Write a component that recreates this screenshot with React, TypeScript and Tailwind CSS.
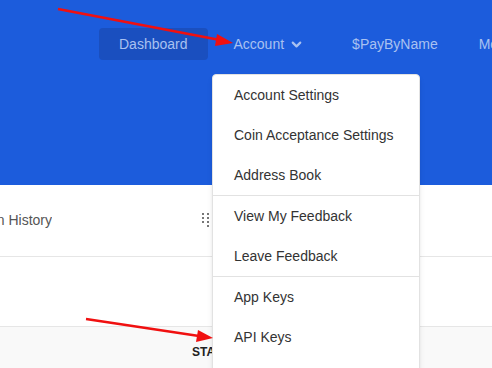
import { ChevronDown } from "lucide-react";

const menuGroups = [
  ["Account Settings", "Coin Acceptance Settings", "Address Book"],
  ["View My Feedback", "Leave Feedback"],
  ["App Keys", "API Keys"],
];

const GripIcon = () => (
  <svg width="8" height="16" viewBox="0 0 8 16" className="text-[#777]">
    {[0, 4, 8].map((y) => (
      <g key={y}>
        <rect x="0" y={y} width="2" height="2" fill="currentColor" />
        <rect x="5" y={y} width="2" height="2" fill="currentColor" />
      </g>
    ))}
    <rect x="5" y="12" width="2" height="2" fill="currentColor" />
  </svg>
);

const AccountMenu = () => (
  <div className="absolute left-[212px] top-[74px] w-[208px] h-[320px] bg-white border border-[#e2e2e2] rounded-t shadow-md">
    {menuGroups.map((group, i) => (
      <div
        key={i}
        className={i > 0 ? "border-t border-[#e2e2e2]" : ""}
      >
        {group.map((label) => (
          <div
            key={label}
            className="h-10 flex items-center pl-[21px] text-[14px] text-[#333]"
          >
            {label}
          </div>
        ))}
      </div>
    ))}
  </div>
);

const Arrows = () => (
  <svg
    className="absolute inset-0 pointer-events-none"
    width="492"
    height="368"
    viewBox="0 0 492 368"
  >
    <line x1="58" y1="9" x2="220" y2="40" stroke="#f01010" strokeWidth="2.5" />
    <polygon points="233,43 217,34 215,46" fill="#f01010" />
    <line x1="86" y1="319" x2="199" y2="336" stroke="#f01010" strokeWidth="2.5" />
    <polygon points="213,338 198,330 196,342" fill="#f01010" />
  </svg>
);

export default function App() {
  return (
    <div className="relative w-[492px] h-[368px] overflow-hidden bg-white font-['Liberation_Sans',Arial,sans-serif]">
      <header className="h-[185px] bg-[#1c5cdc] pt-[28px] pl-[99px]">
        <nav className="flex items-center h-8 text-[14px] text-[#a9c1f0] whitespace-nowrap">
          <div className="h-8 flex items-center px-5 rounded bg-[#1a4fbf]">
            Dashboard
          </div>
          <div className="h-8 flex items-center pl-[26px] pr-[24px]">
            Account
            <ChevronDown className="ml-[5px] w-[15px] h-[15px]" strokeWidth={3.5} />
          </div>
          <div className="h-8 flex items-center px-6">$PayByName</div>
          <div className="h-8 flex items-center pl-[17px]">More</div>
        </nav>
      </header>

      <div className="h-[72px] flex items-center border-b border-[#e6e6e6]">
        <div className="w-[52px] overflow-hidden flex justify-end whitespace-nowrap text-[14px] text-[#555]">
          Transaction History
        </div>
        <div className="ml-[150px]">
          <GripIcon />
        </div>
      </div>

      <div className="h-[70px] border-b border-[#e6e6e6]" />

      <div className="h-[50px] bg-[#f9f9f9] flex items-center pl-[192px] text-[12px] font-bold text-[#222]">
        STATUS
      </div>

      <AccountMenu />
      <Arrows />
    </div>
  );
}
